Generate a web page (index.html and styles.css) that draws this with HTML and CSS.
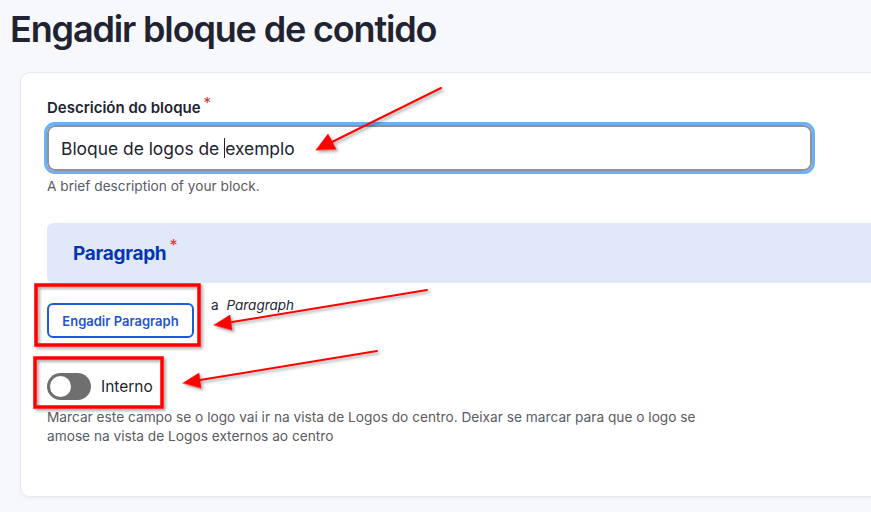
FILE: index.html
```html
<!DOCTYPE html>
<html lang="gl">
<head>
<meta charset="utf-8">
<title>Engadir bloque de contido</title>
<link rel="stylesheet" href="styles.css">
</head>
<body>
<h1 class="page-title">Engadir bloque de contido</h1>
<div class="card">
  <div class="field">
    <label class="label">Descrición do bloque<span class="req">*</span></label>
    <div class="input"><span>Bloque de logos de </span><span class="caret"></span><span>exemplo</span></div>
    <div class="desc">A brief description of your block.</div>
  </div>
  <div class="para-head"><span class="para-title">Paragraph</span><span class="req">*</span></div>
  <div class="add-row">
    <button class="btn">Engadir Paragraph</button>
    <span class="add-text">a <em>Paragraph</em></span>
  </div>
  <div class="toggle-row">
    <span class="switch"><span class="knob"></span></span>
    <span class="toggle-label">Interno</span>
  </div>
  <div class="desc wide">Marcar este campo se o logo vai ir na vista de Logos do centro. Deixar se marcar para que o logo se amose na vista de Logos externos ao centro</div>
</div>
<svg class="annot" width="871" height="512" viewBox="0 0 871 512">
  <defs>
    <filter id="sh" x="-20%" y="-20%" width="140%" height="140%">
      <feDropShadow dx="2" dy="2" stdDeviation="1.5" flood-color="#000" flood-opacity="0.35"/>
    </filter>
  </defs>
  <g filter="url(#sh)" fill="none" stroke="#f00" stroke-width="3.5">
    <rect x="36" y="285" width="163" height="60"/>
    <rect x="35" y="358" width="127" height="49"/>
  </g>
  <g filter="url(#sh)" fill="#f00" stroke="#f00" stroke-width="2" stroke-linecap="round">
    <line x1="441" y1="88" x2="332" y2="142"/>
    <polygon points="316,150 328,134 336,149" stroke-width="0.5"/>
    <line x1="427" y1="290" x2="232" y2="322"/>
    <polygon points="214,325 230,315 232,330" stroke-width="0.5"/>
    <line x1="377" y1="351" x2="200" y2="380"/>
    <polygon points="183,383 199,373 201,388" stroke-width="0.5"/>
  </g>
</svg>
</body>
</html>
```
FILE: styles.css
```css
* { box-sizing: border-box; }
html, body { margin: 0; padding: 0; }
body {
  background: #f7f8fb;
  font-family: Inter, "Noto Sans", sans-serif;
  color: #222330;
  width: 871px;
  height: 512px;
  overflow: hidden;
  position: relative;
}
.page-title {
  margin: 8px 0 21px 10px;
  font-size: 36px;
  line-height: 43px;
  font-weight: 600;
  letter-spacing: -0.032em;
  color: #222330;
}
.card {
  margin-left: 20px;
  width: 880px;
  height: 425px;
  background: #fff;
  border: 1px solid #e8e9ee;
  border-radius: 10px;
  box-shadow: 0 2px 4px rgba(0,0,0,0.04);
  padding: 26px 0 0 26px;
}
.field { display: flex; flex-direction: column; }
.label {
  font-size: 15px;
  line-height: 18px;
  font-weight: 600;
  color: #222330;
}
.req {
  color: #e0302b;
  font-weight: 400;
  margin-left: 3px;
  position: relative;
  top: -5px;
  font-size: 15px;
}
.input {
  margin-top: 8px;
  width: 765px;
  height: 46px;
  border: 2px solid #8e929c;
  border-radius: 8px;
  outline: 3px solid #6bb0f8;
  display: flex;
  align-items: center;
  padding-left: 12px;
  font-size: 17.4px;
  color: #222330;
  white-space: pre;
}
.caret {
  display: inline-block;
  width: 1px;
  height: 20px;
  background: #222330;
}
.desc {
  margin-top: 6px;
  font-size: 13.7px;
  line-height: 19px;
  color: #5a5b63;
}
.para-head {
  margin-top: 27px;
  height: 60px;
  background: #e0e8fa;
  border-radius: 6px 0 0 6px;
  display: flex;
  align-items: center;
  padding-left: 26px;
}
.para-title {
  font-size: 19px;
  font-weight: 700;
  color: #0036b1;
  letter-spacing: -0.015em;
}
.para-head .req { top: -8px; font-size: 16px; }
.add-row {
  margin-top: 14px;
  display: flex;
  align-items: flex-start;
  gap: 17px;
}
.btn {
  margin-top: 6px;
  width: 147px;
  height: 35px;
  background: #fff;
  border: 2px solid #1d5bdc;
  border-radius: 6px;
  color: #1f55cc;
  font-family: Inter, "Noto Sans", sans-serif;
  font-size: 13px;
  font-weight: 600;
  padding: 0;
}
.add-text {
  font-size: 13.5px;
  line-height: 16px;
  color: #222330;
  margin-top: 0;
}
.add-text em { margin-left: 4px; }
.toggle-row {
  margin-top: 35px;
  display: flex;
  align-items: center;
  gap: 10px;
}
.switch {
  width: 44px;
  height: 27px;
  border-radius: 14px;
  background: #6f6f6f;
  display: flex;
  align-items: center;
  padding-left: 3px;
}
.knob {
  width: 21px;
  height: 21px;
  border-radius: 50%;
  background: #fff;
}
.toggle-label {
  font-size: 15.5px;
  color: #222330;
}
.wide { margin-top: 8px; max-width: 680px; }
.annot {
  position: absolute;
  left: 0;
  top: 0;
  pointer-events: none;
}
```
